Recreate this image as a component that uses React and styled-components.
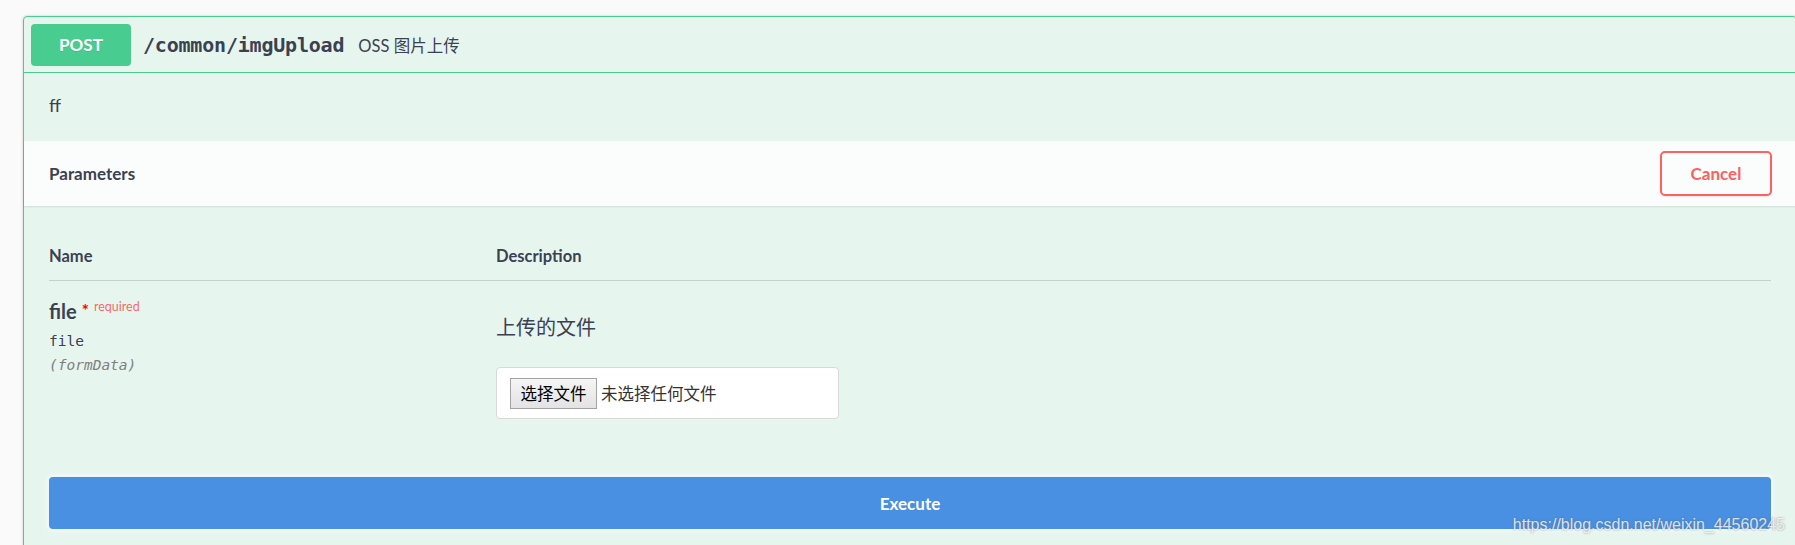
import React from 'react';
import styled, { createGlobalStyle } from 'styled-components';

const GlobalStyle = createGlobalStyle`
  html, body {
    margin: 0;
    padding: 0;
    background: #fafafa;
    overflow: hidden;
  }
  body {
    font-family: Lato, "Noto Sans CJK SC", sans-serif;
    color: #3b4151;
  }
`;

const Page = styled.div`
  position: relative;
  height: 545px;
  padding: 16px 0 0 23px;
  box-sizing: border-box;
  overflow: hidden;
`;

const Opblock = styled.div`
  margin-right: -2px;
  border: 1px solid #49cc90;
  border-radius: 4px;
  background: rgba(73, 204, 144, 0.1);
  box-shadow: 0 0 3px rgba(0, 0, 0, 0.19);
`;

const Summary = styled.div`
  display: flex;
  align-items: center;
  padding: 7px 7px 6px;
  border-bottom: 1px solid #49cc90;
`;

const Method = styled.span`
  width: 100px;
  height: 42px;
  line-height: 42px;
  border-radius: 4px;
  background: #49cc90;
  color: #fff;
  font-size: 17px;
  font-weight: 700;
  text-align: center;
  text-shadow: 0 1px 0 rgba(0, 0, 0, 0.1);
`;

const Path = styled.span`
  margin-left: 12px;
  font-family: "DejaVu Sans Mono", monospace;
  font-size: 20px;
  font-weight: 700;
  letter-spacing: -0.2px;
`;

const Summ = styled.span`
  margin-left: 14px;
  font-size: 16.5px;
`;

const Desc = styled.div`
  padding: 19px 25px 23px;
  font-size: 18px;
  line-height: 26px;
`;

const SectionHeader = styled.div`
  display: flex;
  align-items: center;
  justify-content: space-between;
  height: 65px;
  padding: 0 24px 0 25px;
  background: rgba(255, 255, 255, 0.8);
  box-shadow: 0 1px 2px rgba(0, 0, 0, 0.1);
`;

const Title = styled.h4`
  margin: 0;
  font-size: 17px;
  font-weight: 700;
`;

const CancelButton = styled.button`
  width: 112px;
  height: 45px;
  border: 2px solid #ff6060;
  border-radius: 5px;
  background: transparent;
  color: #ff6060;
  font-family: inherit;
  font-size: 17px;
  font-weight: 700;
  box-shadow: 0 1px 2px rgba(0, 0, 0, 0.1);
`;

const TableWrap = styled.div`
  padding: 25px 25px 0;
`;

const Grid = styled.div`
  display: grid;
  grid-template-columns: 447px 1fr;
  padding: ${(p) => p.$pad};
  border-bottom: ${(p) => (p.$line ? '1px solid rgba(59, 65, 81, 0.2)' : 'none')};
`;

const ColHead = styled.div`
  font-size: 16.5px;
  font-weight: 700;
  line-height: 20px;
`;

const ParamName = styled.div`
  font-size: 20px;
  font-weight: 700;
  line-height: 24px;
`;

const Star = styled.span`
  color: red;
  font-size: 17px;
  font-weight: 700;
  margin-left: 5px;
  position: relative;
  top: -2px;
`;

const Required = styled.sup`
  color: rgba(255, 0, 0, 0.6);
  font-size: 12.5px;
  font-weight: 400;
  margin-left: 5px;
  position: relative;
  top: -8px;
  vertical-align: baseline;
`;

const Mono = styled.div`
  margin-top: ${(p) => p.$top}px;
  font-family: "DejaVu Sans Mono", monospace;
  font-size: 14.5px;
  line-height: 20px;
  font-style: ${(p) => (p.$italic ? 'italic' : 'normal')};
  color: ${(p) => (p.$italic ? '#808080' : '#3b4151')};
`;

const Markdown = styled.p`
  margin: 13px 0 25px;
  font-size: 20px;
  line-height: 30px;
  font-family: "Noto Sans CJK SC", sans-serif;
`;

const FileBox = styled.div`
  display: flex;
  align-items: center;
  gap: 4px;
  width: 343px;
  height: 52px;
  box-sizing: border-box;
  padding: 0 13px;
  background: #fff;
  border: 1px solid #d9d9d9;
  border-radius: 4px;
  font-family: "Noto Sans CJK SC", sans-serif;
  font-size: 16.5px;
`;

const PickButton = styled.span`
  width: 87px;
  height: 31px;
  box-sizing: border-box;
  display: flex;
  align-items: center;
  justify-content: center;
  border: 1px solid #a3a3a3;
  background: linear-gradient(#f5f5f5, #e3e3e3);
  color: #000;
`;

const NoFile = styled.span`
  color: #333;
`;

const ExecuteWrap = styled.div`
  padding: 58px 25px 25px;
`;

const ExecuteButton = styled.button`
  width: 100%;
  height: 52px;
  border: none;
  border-radius: 4px;
  background: #4990e2;
  color: #fff;
  font-family: inherit;
  font-size: 17px;
  font-weight: 700;
  box-shadow: 0 0 3px 3px rgba(255, 255, 255, 0.35);
`;

const Watermark = styled.div`
  position: absolute;
  right: 10px;
  bottom: 11px;
  font-family: "Liberation Sans", Arial, sans-serif;
  font-size: 16px;
  white-space: nowrap;
  color: rgba(255, 255, 255, 0.8);
  text-shadow: 0 0 2px rgba(90, 90, 90, 0.7);
`;

export default function App() {
  return (
    <Page>
      <GlobalStyle />
      <Opblock>
        <Summary>
          <Method>POST</Method>
          <Path>/common/imgUpload</Path>
          <Summ>OSS 图片上传</Summ>
        </Summary>
        <Desc>ff</Desc>
        <SectionHeader>
          <Title>Parameters</Title>
          <CancelButton>Cancel</CancelButton>
        </SectionHeader>
        <TableWrap>
          <Grid $pad="15px 0 14px" $line>
            <ColHead>Name</ColHead>
            <ColHead>Description</ColHead>
          </Grid>
          <Grid $pad="18px 0 0">
            <div>
              <ParamName>
                file<Star>*</Star>
                <Required>required</Required>
              </ParamName>
              <Mono $top={4}>file</Mono>
              <Mono $top={4} $italic>(formData)</Mono>
            </div>
            <div>
              <Markdown>上传的文件</Markdown>
              <FileBox>
                <PickButton>选择文件</PickButton>
                <NoFile>未选择任何文件</NoFile>
              </FileBox>
            </div>
          </Grid>
        </TableWrap>
        <ExecuteWrap>
          <ExecuteButton>Execute</ExecuteButton>
        </ExecuteWrap>
      </Opblock>
      <Watermark>https://blog.csdn.net/weixin_44560245</Watermark>
    </Page>
  );
}
